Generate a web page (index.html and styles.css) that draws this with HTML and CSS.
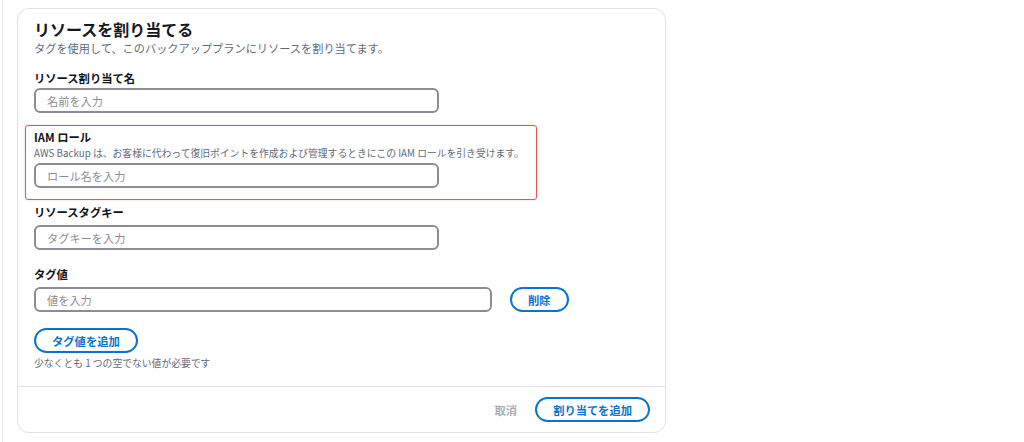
FILE: index.html
```html
<!DOCTYPE html>
<html lang="ja">
<head>
  <meta charset="UTF-8" />
  <title>リソースを割り当てる</title>
  <link rel="stylesheet" href="styles.css">
</head>
<body>
  <div class="page">
    <div class="card">
      <div class="card-body">
        <h2 class="title">リソースを割り当てる</h2>
        <p class="subtitle">タグを使用して、このバックアッププランにリソースを割り当てます。</p>

        <div class="field first">
          <label class="label">リソース割り当て名</label>
          <input class="input" type="text" placeholder="名前を入力">
        </div>

        <div class="field highlight">
          <label class="label">IAM ロール</label>
          <p class="help">AWS Backup は、お客様に代わって復旧ポイントを作成および管理するときにこの IAM ロールを引き受けます。</p>
          <input class="input" type="text" placeholder="ロール名を入力">
        </div>

        <div class="field tagkey">
          <label class="label">リソースタグキー</label>
          <input class="input" type="text" placeholder="タグキーを入力">
        </div>

        <div class="field tagvalue">
          <label class="label">タグ値</label>
          <div class="row">
            <input class="input wide" type="text" placeholder="値を入力">
            <button class="btn">削除</button>
          </div>
        </div>

        <button class="btn add">タグ値を追加</button>
        <p class="hint">少なくとも 1 つの空でない値が必要です</p>
      </div>

      <div class="card-footer">
        <button class="link">取消</button>
        <button class="btn">割り当てを追加</button>
      </div>
    </div>
  </div>
</body>
</html>
```

FILE: styles.css
```css
html,
body {
  height: 100%;
}

body {
  margin: 0;
  background: #fff;
  font-family: "Noto Sans CJK JP", "Noto Sans", sans-serif;
  color: #0f141a;
}

.page {
  box-sizing: border-box;
  height: 100%;
  margin-left: 2px;
  padding: 8px 0 0 14px;
  border-left: 1px solid #f0f0f2;
}

.card {
  width: 647px;
  border: 1px solid #e1e1e4;
  border-radius: 12px;
  background: #fff;
}

.card-body {
  display: flex;
  flex-direction: column;
  align-items: flex-start;
  padding: 10px 16px 16px 16px;
}

.title {
  margin: 0;
  font-size: 16px;
  line-height: 20px;
  font-weight: 700;
  color: #16191f;
}

.subtitle {
  margin: 1px 0 0;
  font-size: 11.2px;
  line-height: 16px;
  color: #5f6b7a;
}

.field {
  display: flex;
  flex-direction: column;
  align-items: flex-start;
}

.field.first {
  margin-top: 14px;
}

.label {
  font-size: 11.3px;
  line-height: 16px;
  font-weight: 700;
  color: #0f141a;
}

.input {
  box-sizing: border-box;
  width: 405px;
  height: 25px;
  margin-top: 2px;
  padding: 0 11px;
  border: 2px solid #8c8c94;
  border-radius: 6px;
  font-family: inherit;
  font-size: 11.2px;
  color: #0f141a;
  background: #fff;
}

.input::placeholder {
  color: #8c8c94;
}

.input.wide {
  width: 458px;
  margin-top: 0;
}

.highlight {
  align-self: stretch;
  margin: 12px 112px 0 -9px;
  padding: 3px 8px 11px;
  border: 1px solid #e4555a;
  border-radius: 3px;
  box-shadow: 0 0 2px rgba(228, 85, 90, 0.35);
}

.help {
  margin: 1px 0 0;
  font-size: 9.8px;
  line-height: 14px;
  color: #5f6b7a;
}

.highlight .input {
  margin-top: 3px;
}

.tagkey {
  margin-top: 4px;
}

.tagkey .input {
  margin-top: 5px;
}

.tagvalue {
  margin-top: 16px;
}

.row {
  display: flex;
  align-items: center;
  gap: 18px;
  margin-top: 5px;
}

.btn {
  box-sizing: border-box;
  height: 25px;
  padding: 0 16px;
  border: 2px solid #0972d3;
  border-radius: 13px;
  background: #fff;
  color: #0972d3;
  font-family: inherit;
  font-size: 11.3px;
  font-weight: 700;
  cursor: pointer;
}

.btn.add {
  margin-top: 16px;
}

.hint {
  margin: 3px 0 0;
  font-size: 9.8px;
  line-height: 14px;
  color: #5f6b7a;
}

.card-footer {
  display: flex;
  justify-content: flex-end;
  align-items: center;
  gap: 18px;
  padding: 10px 15px 10px;
  border-top: 1px solid #e1e1e4;
}

.link {
  padding: 0;
  border: none;
  background: none;
  font-family: inherit;
  font-size: 11.3px;
  font-weight: 700;
  color: #a9adb3;
}
```
